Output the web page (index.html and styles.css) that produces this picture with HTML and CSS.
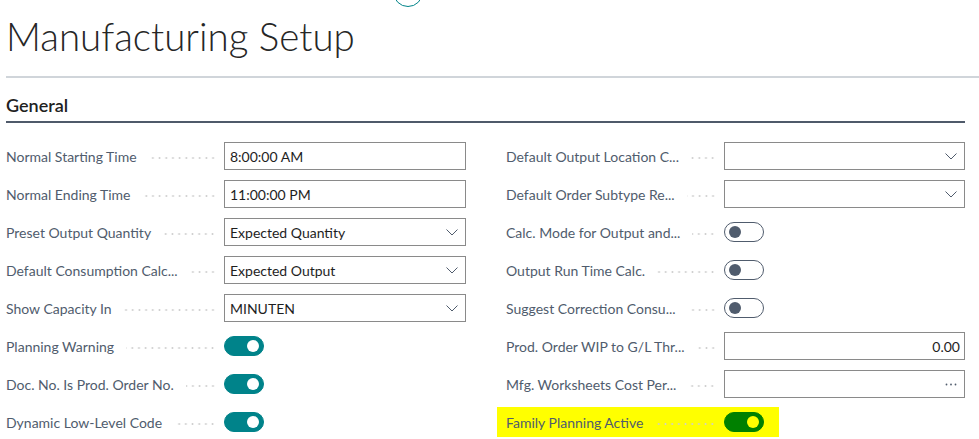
FILE: index.html
```html
<!DOCTYPE html>
<html lang="en">
<head>
    <meta charset="UTF-8">
    <meta name="viewport" content="width=device-width, initial-scale=1.0">
    <title>Manufacturing Setup</title>
    <link rel="stylesheet" href="styles.css">
</head>
<body>
  <span class="top-btn"></span>

  <h1 class="page-title">Manufacturing Setup</h1>

  <div class="section">
    <h2 class="section-title">General</h2>

    <div class="fields">
      <!-- left column -->
      <div class="col">
        <div class="row">
          <div class="cap"><span class="lbl">Normal Starting Time</span><span class="dots"></span></div>
          <div class="box">8:00:00 AM</div>
        </div>
        <div class="row">
          <div class="cap"><span class="lbl">Normal Ending Time</span><span class="dots"></span></div>
          <div class="box">11:00:00 PM</div>
        </div>
        <div class="row">
          <div class="cap"><span class="lbl">Preset Output Quantity</span><span class="dots"></span></div>
          <div class="box select">Expected Quantity
            <svg class="chev" width="12" height="7" viewBox="0 0 12 7"><polyline points="0.5,0.5 6,6 11.5,0.5" /></svg>
          </div>
        </div>
        <div class="row">
          <div class="cap"><span class="lbl">Default Consumption Calc...</span><span class="dots"></span></div>
          <div class="box select">Expected Output
            <svg class="chev" width="12" height="7" viewBox="0 0 12 7"><polyline points="0.5,0.5 6,6 11.5,0.5" /></svg>
          </div>
        </div>
        <div class="row">
          <div class="cap"><span class="lbl">Show Capacity In</span><span class="dots"></span></div>
          <div class="box select">MINUTEN
            <svg class="chev" width="12" height="7" viewBox="0 0 12 7"><polyline points="0.5,0.5 6,6 11.5,0.5" /></svg>
          </div>
        </div>
        <div class="row">
          <div class="cap"><span class="lbl">Planning Warning</span><span class="dots"></span></div>
          <span class="toggle on"></span>
        </div>
        <div class="row">
          <div class="cap"><span class="lbl">Doc. No. Is Prod. Order No.</span><span class="dots"></span></div>
          <span class="toggle on"></span>
        </div>
        <div class="row">
          <div class="cap"><span class="lbl">Dynamic Low-Level Code</span><span class="dots"></span></div>
          <span class="toggle on"></span>
        </div>
      </div>

      <!-- right column -->
      <div class="col">
        <div class="row">
          <div class="cap"><span class="lbl">Default Output Location C...</span><span class="dots"></span></div>
          <div class="box select">
            <svg class="chev" width="12" height="7" viewBox="0 0 12 7"><polyline points="0.5,0.5 6,6 11.5,0.5" /></svg>
          </div>
        </div>
        <div class="row">
          <div class="cap"><span class="lbl">Default Order Subtype Re...</span><span class="dots"></span></div>
          <div class="box select">
            <svg class="chev" width="12" height="7" viewBox="0 0 12 7"><polyline points="0.5,0.5 6,6 11.5,0.5" /></svg>
          </div>
        </div>
        <div class="row">
          <div class="cap"><span class="lbl">Calc. Mode for Output and...</span><span class="dots"></span></div>
          <span class="toggle"></span>
        </div>
        <div class="row">
          <div class="cap"><span class="lbl">Output Run Time Calc.</span><span class="dots"></span></div>
          <span class="toggle"></span>
        </div>
        <div class="row">
          <div class="cap"><span class="lbl">Suggest Correction Consu...</span><span class="dots"></span></div>
          <span class="toggle"></span>
        </div>
        <div class="row">
          <div class="cap"><span class="lbl">Prod. Order WIP to G/L Thr...</span><span class="dots"></span></div>
          <div class="box num">0.00</div>
        </div>
        <div class="row">
          <div class="cap"><span class="lbl">Mfg. Worksheets Cost Per...</span><span class="dots"></span></div>
          <div class="box lookup">
            <svg width="12" height="3" viewBox="0 0 12 3"><circle cx="1.5" cy="1.5" r="0.9" /><circle cx="6" cy="1.5" r="0.9" /><circle cx="10.5" cy="1.5" r="0.9" /></svg>
          </div>
        </div>
        <div class="row">
          <div class="marked">
            <div class="cap"><span class="lbl">Family Planning Active</span><span class="dots"></span></div>
            <span class="toggle on green"></span>
          </div>
        </div>
      </div>
    </div>
  </div>
</body>
</html>
```

FILE: styles.css
```css
body{
    margin: 0;
    padding-left: 6px;
    background-color: white;
    font-family: Lato, "Open Sans", sans-serif;
    color: #212121;
    overflow: hidden;
}
.top-btn{
    position: absolute;
    left: 393px;
    top: -23px;
    width: 30px;
    height: 30px;
    border: 1px solid #008489;
    border-radius: 50%;
    box-sizing: border-box;
}
.page-title{
    margin: 12px 0 0 0;
    font-size: 38.5px;
    line-height: 48px;
    font-weight: 300;
    color: #262626;
    padding-bottom: 16px;
    border-bottom: 2px solid #d0d5da;
}
.section{
    padding-right: 14px;
}
.section-title{
    margin: 15px 0 0 0;
    font-size: 18px;
    line-height: 24px;
    font-weight: 600;
    padding-bottom: 4px;
    border-bottom: 2px solid #4f5a6a;
}
.fields{
    display: grid;
    grid-template-columns: 460px 459px;
    column-gap: 40px;
    margin-top: 14px;
}
.row{
    display: flex;
    align-items: center;
    height: 38px;
}
.cap{
    display: flex;
    align-items: center;
    flex: 0 0 218px;
    height: 100%;
}
.lbl{
    font-size: 14px;
    color: #505c6d;
    white-space: nowrap;
}
.dots{
    flex: 1;
    height: 2px;
    margin: 3px 8px 0 12px;
    background-image: radial-gradient(circle, #cfcfcf 0.8px, transparent 1.2px);
    background-size: 6.7px 2px;
    background-position: right center;
    background-repeat: repeat-x;
}
.box{
    flex: 1;
    height: 28px;
    box-sizing: border-box;
    border: 1px solid #8a8a8a;
    padding: 0 5px;
    display: flex;
    align-items: center;
    font-size: 14px;
    color: #1e1e1e;
}
.chev{
    margin-left: auto;
    margin-right: 2px;
    fill: none;
    stroke: #505c6d;
    stroke-width: 1;
}
.num{
    justify-content: flex-end;
    padding-right: 4px;
}
.lookup{
    justify-content: flex-end;
    padding-right: 7px;
}
.lookup svg{
    fill: #505c6d;
}
.toggle{
    position: relative;
    width: 40px;
    height: 20px;
    box-sizing: border-box;
    border: 1px solid #505c6d;
    border-radius: 10px;
    background-color: white;
}
.toggle::after{
    content: "";
    position: absolute;
    left: 4px;
    top: 3px;
    width: 12px;
    height: 12px;
    border-radius: 50%;
    background-color: #505c6d;
}
.toggle.on{
    border-color: #00838a;
    background-color: #00838a;
}
.toggle.on::after{
    left: auto;
    right: 4px;
    background-color: white;
}
.toggle.green{
    border-color: #008000;
    background-color: #008000;
}
.toggle.green::after{
    background-color: #ffff00;
}
.marked{
    display: flex;
    align-items: center;
    height: 30px;
    margin-left: -9px;
    padding: 0 15px 0 9px;
    background-color: #ffff00;
}
```
